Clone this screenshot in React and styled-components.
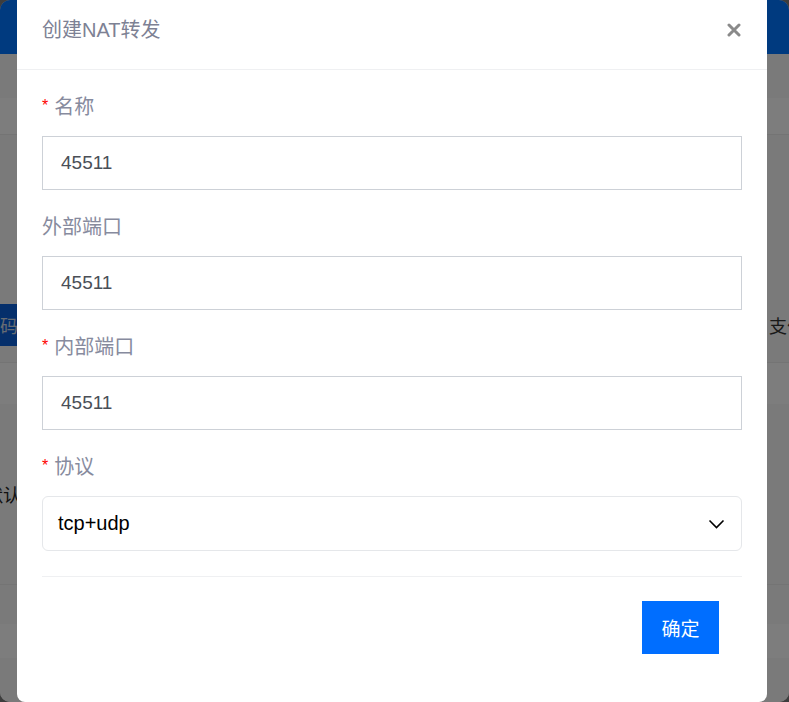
import React from 'react';
import styled, { createGlobalStyle } from 'styled-components';

const GlobalStyle = createGlobalStyle`
  html, body {
    margin: 0;
    padding: 0;
    background: #7a7a7a;
    overflow: hidden;
  }
  body {
    font-family: "Liberation Sans", "Noto Sans CJK SC", sans-serif;
  }
`;

const Page = styled.div`
  height: 702px;
  background: #f4f4f4;
  border-radius: 10px;
  overflow: hidden;
  display: flex;
  flex-direction: column;
`;

const TopBar = styled.div`
  height: 54px;
  background: #0074ff;
  box-shadow: 0 3px 6px rgba(0, 0, 0, 0.15);
  flex-shrink: 0;
`;

const Band = styled.div`
  height: ${p => p.h}px;
  background: ${p => (p.light ? '#fbfbfb' : '#f4f4f4')};
  border-bottom: 1px solid ${p => (p.line ? '#e8e8e8' : 'transparent')};
  display: flex;
  align-items: center;
  font-size: 18px;
  color: #333;
  flex-shrink: 0;
`;

const BgButton = styled.div`
  width: 30px;
  height: 42px;
  background: #0a5fd6;
  color: #cfd8e6;
  display: flex;
  align-items: center;
  font-size: 18px;
`;

const Spacer = styled.div`
  flex: 1;
`;

const EdgeText = styled.div`
  width: 20px;
  overflow: hidden;
  white-space: nowrap;
  color: #333;
`;

const CutText = styled.div`
  white-space: nowrap;
  text-indent: -15px;
  color: #222;
`;

const Overlay = styled.div`
  position: fixed;
  inset: 0;
  background: rgba(0, 0, 0, 0.5);
`;

const Modal = styled.div`
  position: fixed;
  left: 17px;
  top: 0;
  width: 750px;
  height: 702px;
  background: #fff;
  border-radius: 0 0 8px 8px;
  box-sizing: border-box;
  display: flex;
  flex-direction: column;
`;

const Header = styled.div`
  height: 70px;
  box-sizing: border-box;
  border-bottom: 1px solid #eff0f2;
  padding: 19px 25px 0;
  display: flex;
  align-items: flex-start;
  justify-content: space-between;
`;

const Title = styled.div`
  font-size: 20px;
  line-height: 22px;
  color: #7d8194;
`;

const Close = styled.button`
  border: 0;
  background: none;
  padding: 0;
  margin: 4px 1px 0 0;
  width: 14px;
  height: 14px;
  cursor: pointer;
  display: flex;
`;

const Body = styled.div`
  padding: 25px 25px 0;
`;

const Field = styled.div`
  margin-bottom: 25px;
`;

const Label = styled.div`
  font-size: 20px;
  line-height: 24px;
  color: #878b9e;
  margin-bottom: 17px;
  display: flex;
  align-items: center;
`;

const Star = styled.span`
  color: #f00;
  font-size: 16px;
  margin-right: 6px;
  position: relative;
  top: -1px;
`;

const Input = styled.input`
  display: block;
  width: 100%;
  height: 54px;
  box-sizing: border-box;
  border: 1px solid #cdd1d7;
  border-radius: 0;
  padding: 0 18px;
  font-family: "Liberation Sans", "Noto Sans CJK SC", sans-serif;
  font-size: 19px;
  color: #4a4f57;
  outline: none;
`;

const Select = styled.div`
  height: 55px;
  box-sizing: border-box;
  border: 1px solid #e5e7ea;
  border-radius: 6px;
  padding: 0 16px 0 15px;
  display: flex;
  align-items: center;
  justify-content: space-between;
  font-size: 20px;
  color: #000;
`;

const Footer = styled.div`
  margin: 0 25px;
  border-top: 1px solid #eff0f2;
  padding: 24px 23px 0 0;
  display: flex;
  justify-content: flex-end;
`;

const Confirm = styled.button`
  width: 77px;
  height: 53px;
  border: 0;
  border-radius: 0;
  background: #006eff;
  color: #fff;
  font-family: "Liberation Sans", "Noto Sans CJK SC", sans-serif;
  font-size: 19px;
  cursor: pointer;
`;

const fields = [
  { label: '名称', required: true, value: '45511' },
  { label: '外部端口', required: false, value: '45511' },
  { label: '内部端口', required: true, value: '45511' },
];

export default function App() {
  return (
    <>
      <GlobalStyle />
      <Page>
        <TopBar />
        <Band h={43} />
        <Band h={36} light line />
        <Band h={151} />
        <Band h={75} line>
          <BgButton>码</BgButton>
          <Spacer />
          <EdgeText>支付方式</EdgeText>
        </Band>
        <Band h={40} light />
        <Band h={180} line>
          <CutText>默认设置</CutText>
        </Band>
        <Band h={38} />
        <Band h={33} light />
        <Band h={50} />
      </Page>
      <Overlay />
      <Modal>
        <Header>
          <Title>创建NAT转发</Title>
          <Close aria-label="close">
            <svg width="14" height="14" viewBox="0 0 14 14">
              <path d="M2 2 L12 12 M12 2 L2 12" stroke="#8a8a8a" strokeWidth="3" strokeLinecap="round" />
            </svg>
          </Close>
        </Header>
        <Body>
          {fields.map(f => (
            <Field key={f.label}>
              <Label>
                {f.required && <Star>*</Star>}
                {f.label}
              </Label>
              <Input defaultValue={f.value} />
            </Field>
          ))}
          <Field>
            <Label>
              <Star>*</Star>
              协议
            </Label>
            <Select>
              <span>tcp+udp</span>
              <svg width="17" height="10" viewBox="0 0 17 10">
                <polyline points="1.5,1.5 8.5,8.5 15.5,1.5" fill="none" stroke="#000" strokeWidth="1.6" />
              </svg>
            </Select>
          </Field>
        </Body>
        <Footer>
          <Confirm>确定</Confirm>
        </Footer>
      </Modal>
    </>
  );
}
